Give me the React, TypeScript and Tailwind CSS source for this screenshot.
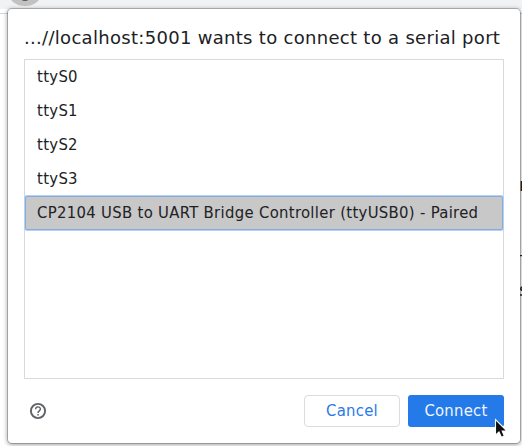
import React from "react";

const ports = ["ttyS0", "ttyS1", "ttyS2", "ttyS3"];

export default function App() {
  return (
    <div className="relative h-[446px] w-[522px] overflow-hidden bg-white font-['DejaVu_Sans',sans-serif] text-[#202124]">
      <div className="h-[14px] border-b border-[#d5d6d8] bg-white">
        <div className="flex h-[9px] justify-start bg-[#f1f2f4] pl-[9px]">
          <svg width="32" height="7" viewBox="0 0 32 7">
            <ellipse cx="16" cy="-6" rx="16" ry="12" fill="#c2c2c2" />
            <ellipse cx="16" cy="-1" rx="3.5" ry="2" fill="#555" />
          </svg>
        </div>
      </div>
      <span className="absolute left-[519px] top-[175px] text-[18px] leading-5">n</span>
      <span className="absolute left-[520px] top-[252px] text-[16px] leading-5">T</span>
      <span className="absolute left-[519px] top-[280px] text-[18px] leading-5">s</span>

      <section className="absolute left-2 top-[9px] flex h-[434px] w-[512px] flex-col rounded-[4px] bg-white px-4 pb-4 shadow-[0_0_0_1px_rgba(0,0,0,0.2),0_1px_4px_1px_rgba(0,0,0,0.35)]">
        <h1 className="h-[50px] whitespace-nowrap pt-[17px] text-[18px] leading-6 tracking-[0.3px]"><span>...//localhost:5001 wants to connect to a serial port</span></h1>
        <div className="h-[320px] shrink-0 border border-[#d8d9db] font-['DejaVu_Sans_Condensed','DejaVu_Sans',sans-serif] text-[16.5px] leading-6 tracking-[0.32px]">
          {ports.map((port) => (
            <div key={port} className="flex h-[34px] items-center pl-3">
              <span>{port}</span>
            </div>
          ))}
          <div className="flex h-[34px] items-center whitespace-nowrap rounded-[2px] border border-[#86acde] bg-[#c8c8c8] pl-[11px] shadow-[0_0_0_1px_#b7d1f1]">
            <span>CP2104 USB to UART Bridge Controller (ttyUSB0) - Paired</span>
          </div>
        </div>
        <footer className="mt-4 flex h-8 items-center gap-2 font-['DejaVu_Sans_Condensed','DejaVu_Sans',sans-serif] text-[16.5px] leading-6 tracking-[0.25px]">
          <svg className="ml-[5px] mr-auto" width="18" height="18" viewBox="0 0 18 18" fill="none" stroke="#5f6368">
            <circle cx="9" cy="9" r="7.1" strokeWidth="1.9" />
            <path d="M6.6 7.2C6.6 4.1 11.4 4.1 11.4 7.1C11.4 8.9 9 8.9 9 11" strokeWidth="1.4" />
            <path d="M9 12v1.5" strokeWidth="1.5" />
          </svg>
          <button className="h-8 w-24 rounded-[4px] border border-[#dadce0] text-[#287ae9]">Cancel</button>
          <button className="h-8 w-24 rounded-[3px] bg-[#247ae9] text-[#f0f5fe]">Connect</button>
        </footer>
      </section>
      <svg className="absolute left-[494px] top-[418px]" width="15" height="22" viewBox="0 0 15 22">
        <path d="M1.5 1.5V17.2L5 14L7.4 19.2L10.3 18L8.2 13H13Z" fill="#101010" stroke="#fff" strokeWidth="1.1" />
      </svg>
    </div>
  );
}
